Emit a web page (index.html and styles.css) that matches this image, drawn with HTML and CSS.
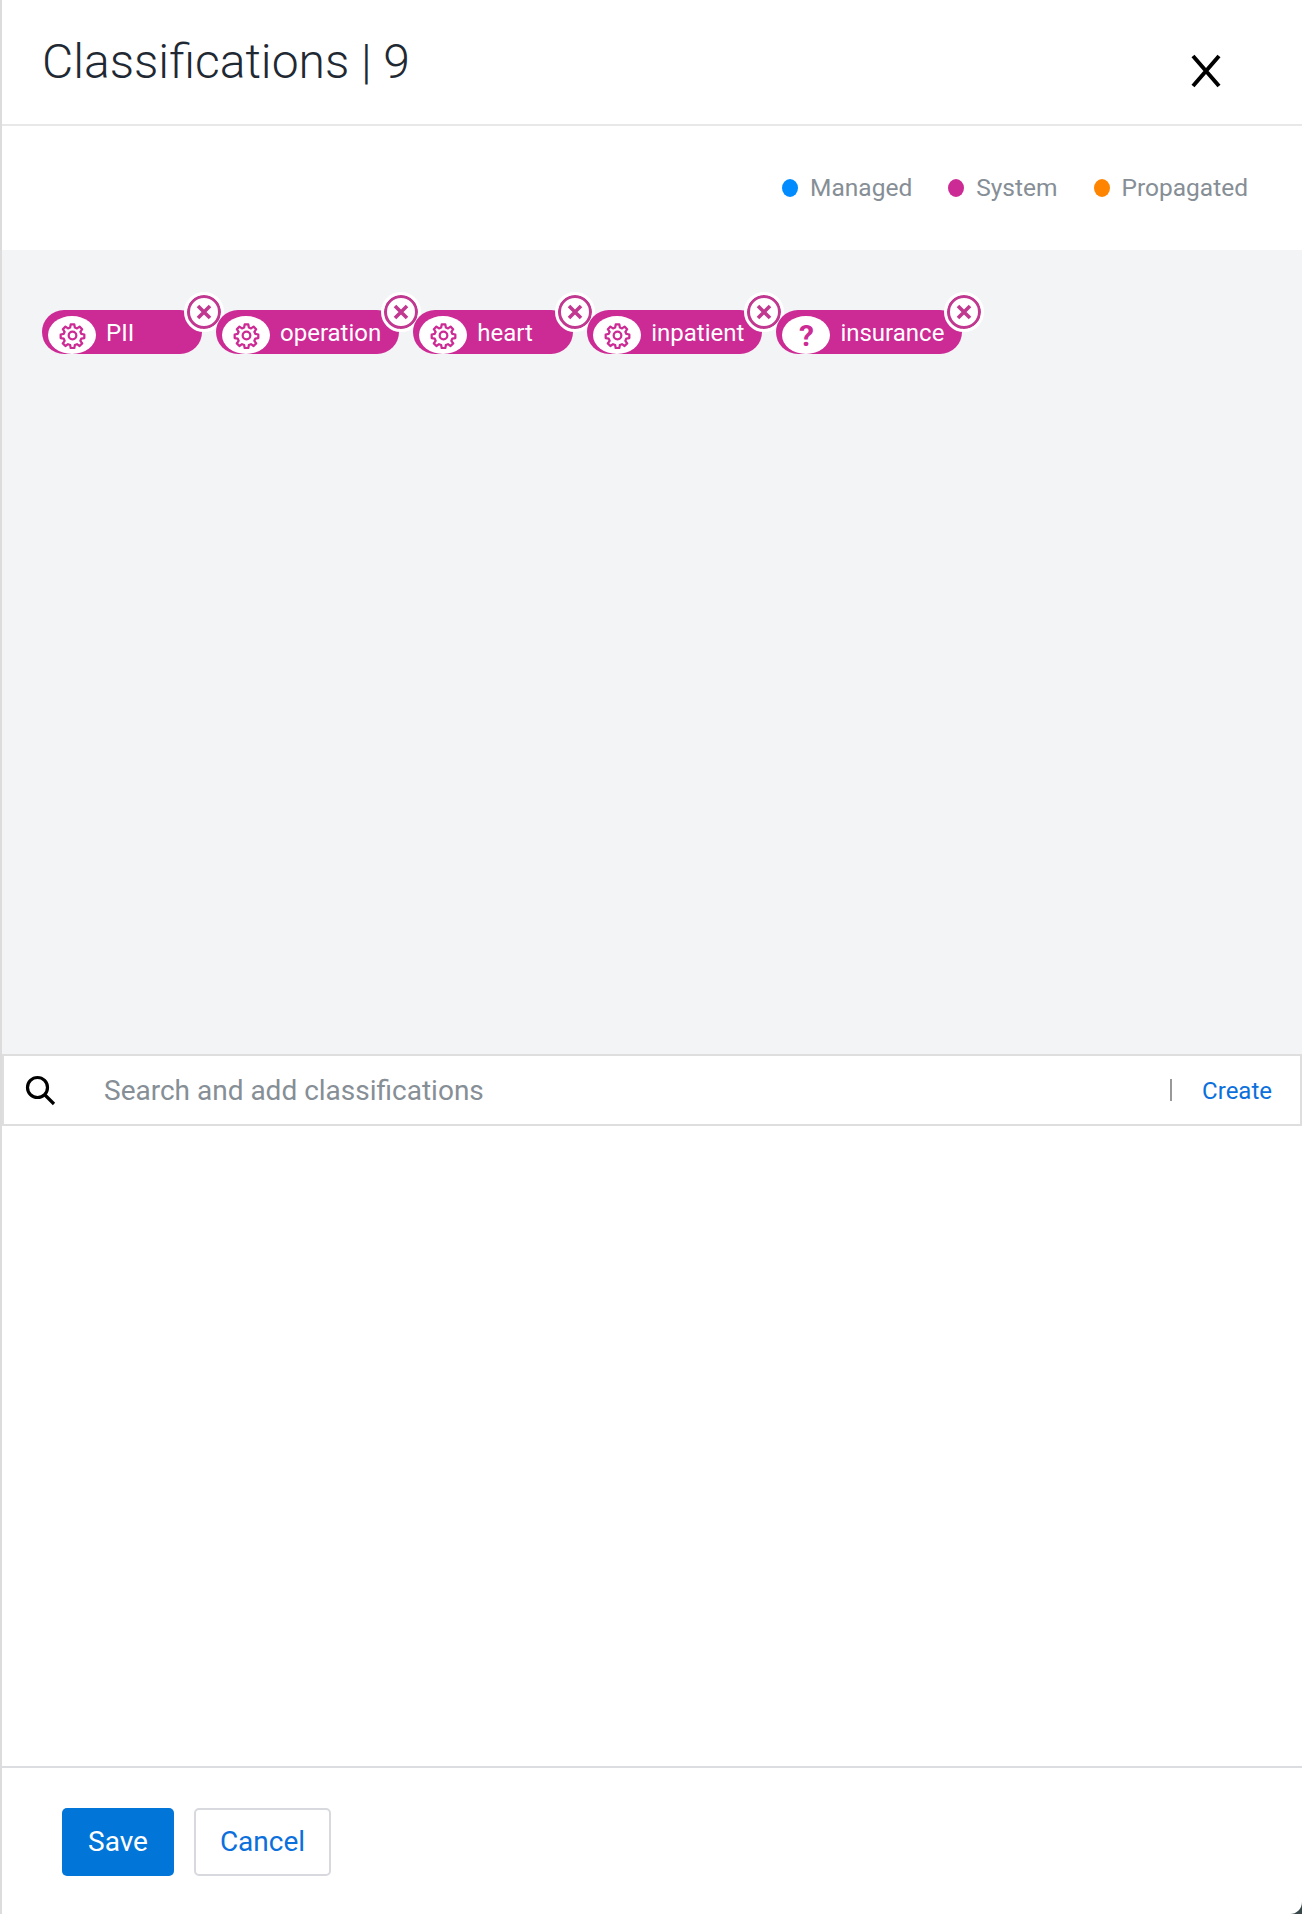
FILE: index.html
```html
<!DOCTYPE html>
<html lang="en">
<head>
    <meta charset="UTF-8">
    <meta name="viewport" content="width=device-width, initial-scale=1.0">
    <title>Classifications</title>
    <link rel="stylesheet" href="styles.css">
</head>
<body>

    <div class="panel">
        <header class="panel-header">
            <h2>Classifications | 9</h2>
            <button class="close-btn" type="button" aria-label="Close">
                <svg width="34" height="34" viewBox="0 0 34 34"><path d="M4 2 L30 32 M30 2 L4 32" fill="none" stroke="#000" stroke-width="4"/></svg>
            </button>
        </header>

        <div class="legend">
            <span class="legend-item"><i class="dot dot-managed"></i>Managed</span>
            <span class="legend-item"><i class="dot dot-system"></i>System</span>
            <span class="legend-item"><i class="dot dot-propagated"></i>Propagated</span>
        </div>

        <div class="chip-area">
            <div class="chip">
                <span class="chip-icon">
                    <svg width="27" height="27" viewBox="0 0 24 24"><use href="#gear"/></svg>
                </span>
                <span class="chip-label">PII</span>
                <button class="chip-remove" type="button" aria-label="Remove PII">
                    <svg width="16" height="16" viewBox="0 0 16 16"><use href="#cross"/></svg>
                </button>
            </div>
            <div class="chip">
                <span class="chip-icon">
                    <svg width="27" height="27" viewBox="0 0 24 24"><use href="#gear"/></svg>
                </span>
                <span class="chip-label">operation</span>
                <button class="chip-remove" type="button" aria-label="Remove operation">
                    <svg width="16" height="16" viewBox="0 0 16 16"><use href="#cross"/></svg>
                </button>
            </div>
            <div class="chip">
                <span class="chip-icon">
                    <svg width="27" height="27" viewBox="0 0 24 24"><use href="#gear"/></svg>
                </span>
                <span class="chip-label">heart</span>
                <button class="chip-remove" type="button" aria-label="Remove heart">
                    <svg width="16" height="16" viewBox="0 0 16 16"><use href="#cross"/></svg>
                </button>
            </div>
            <div class="chip">
                <span class="chip-icon">
                    <svg width="27" height="27" viewBox="0 0 24 24"><use href="#gear"/></svg>
                </span>
                <span class="chip-label">inpatient</span>
                <button class="chip-remove" type="button" aria-label="Remove inpatient">
                    <svg width="16" height="16" viewBox="0 0 16 16"><use href="#cross"/></svg>
                </button>
            </div>
            <div class="chip">
                <span class="chip-icon"><b class="question">?</b></span>
                <span class="chip-label">insurance</span>
                <button class="chip-remove" type="button" aria-label="Remove insurance">
                    <svg width="16" height="16" viewBox="0 0 16 16"><use href="#cross"/></svg>
                </button>
            </div>
        </div>

        <div class="search-bar">
            <svg class="search-icon" width="34" height="34" viewBox="0 0 34 34">
                <circle cx="14.5" cy="14.5" r="10" fill="none" stroke="#000" stroke-width="3.2"/>
                <path d="M22 22 L31 31" fill="none" stroke="#000" stroke-width="3.2"/>
            </svg>
            <input class="search-input" type="text" placeholder="Search and add classifications">
            <span class="search-divider"></span>
            <a class="create-link" href="#">Create</a>
        </div>

        <div class="panel-body"></div>

        <footer class="panel-footer">
            <button class="btn btn-save" type="button">Save</button>
            <button class="btn btn-cancel" type="button">Cancel</button>
        </footer>
    </div>

    <svg class="icon-defs" width="0" height="0" aria-hidden="true">
        <defs>
            <g id="gear" fill="none" stroke="#cc2a94" stroke-width="2" stroke-linejoin="round">
                <circle cx="12" cy="12" r="3.4"/>
                <path d="M10.4 2.2h3.2l.5 2.7 1.9.8 2.3-1.6 2.3 2.3-1.6 2.3.8 1.9 2.7.5v3.2l-2.7.5-.8 1.9 1.6 2.3-2.3 2.3-2.3-1.6-1.9.8-.5 2.7h-3.2l-.5-2.7-1.9-.8-2.3 1.6-2.3-2.3 1.6-2.3-.8-1.9-2.7-.5v-3.2l2.7-.5.8-1.9-1.6-2.3 2.3-2.3 2.3 1.6 1.9-.8z"/>
            </g>
            <path id="cross" d="M2 2 L14 14 M14 2 L2 14" fill="none" stroke="#c0388f" stroke-width="3.6"/>
        </defs>
    </svg>

</body>
</html>
```

FILE: styles.css
```css
html {
    background-color: #37474a;
}

body {
    font-family: Roboto, "Liberation Sans", sans-serif;
    margin: 0;
}

.panel {
    display: flex;
    flex-direction: column;
    height: 1914px;
    box-sizing: border-box;
    background-color: white;
    border-left: 2px solid #dcdcdc;
    border-bottom-right-radius: 12px;
    overflow: hidden;
}

.panel-header {
    display: flex;
    justify-content: space-between;
    height: 124px;
    flex-shrink: 0;
    padding-left: 40px;
    padding-right: 79px;
    border-bottom: 2px solid #e8e8e8;
}

.panel-header h2 {
    margin: 35px 0 0;
    font-size: 48px;
    line-height: 54px;
    font-weight: 300;
    color: #1f2933;
}

.close-btn {
    align-self: flex-start;
    margin-top: 54px;
    padding: 0;
    border: none;
    background: none;
    line-height: 0;
}

.legend {
    display: flex;
    justify-content: flex-end;
    align-items: center;
    gap: 36px;
    height: 124px;
    flex-shrink: 0;
    box-sizing: border-box;
    padding-right: 54px;
    padding-bottom: 1px;
    font-size: 24.5px;
    color: #868e96;
}

.legend-item {
    display: flex;
    align-items: center;
    gap: 12px;
}

.dot {
    width: 16px;
    height: 18px;
    border-radius: 50%;
}

.dot-managed {
    background-color: #008cff;
}

.dot-system {
    background-color: #cc2a94;
}

.dot-propagated {
    background-color: #ff8400;
}

.chip-area {
    display: flex;
    align-items: flex-start;
    gap: 14px;
    height: 804px;
    flex-shrink: 0;
    box-sizing: border-box;
    padding: 60px 40px 0;
    background-color: #f3f4f6;
}

.chip {
    position: relative;
    display: flex;
    align-items: flex-end;
    min-width: 160px;
    height: 44px;
    box-sizing: border-box;
    padding-left: 6px;
    padding-right: 18px;
    background-color: #cc2a94;
    border-radius: 22px;
    color: white;
}

.chip-icon {
    display: flex;
    justify-content: center;
    align-items: center;
    width: 48px;
    height: 38px;
    border-radius: 24px / 19px;
    background-color: white;
}

.question {
    font-size: 30px;
    color: #cc2a94;
}

.chip-label {
    align-self: center;
    margin-top: 1px;
    margin-left: 10px;
    font-size: 24px;
}

.chip-remove {
    position: absolute;
    top: -15px;
    right: -19px;
    display: flex;
    justify-content: center;
    align-items: center;
    width: 34px;
    height: 34px;
    box-sizing: border-box;
    padding: 0;
    background-color: white;
    border: 3px solid #c0388f;
    outline: 3px solid white;
    border-radius: 50%;
}

.search-bar {
    display: flex;
    align-items: center;
    height: 72px;
    flex-shrink: 0;
    box-sizing: border-box;
    padding-left: 19px;
    padding-right: 28px;
    background-color: white;
    border: 2px solid #dedede;
}

.search-icon {
    flex-shrink: 0;
}

.search-input {
    flex: 1;
    margin-left: 47px;
    padding: 0;
    border: none;
    outline: none;
    font-family: inherit;
    font-size: 28px;
}

.search-input::placeholder {
    color: #868e96;
    opacity: 1;
}

.search-divider {
    width: 2px;
    height: 22px;
    margin-right: 30px;
    background-color: #999;
}

.create-link {
    margin-top: 1px;
    color: #0b6fdc;
    text-decoration: none;
    font-size: 24px;
}

.panel-body {
    flex: 1;
    border-bottom: 2px solid #dcdde1;
}

.panel-footer {
    display: flex;
    align-items: flex-start;
    gap: 20px;
    height: 146px;
    flex-shrink: 0;
    box-sizing: border-box;
    padding: 40px 60px 0;
}

.btn {
    height: 68px;
    padding-bottom: 3px;
    border-radius: 5px;
    font-family: inherit;
    font-size: 28px;
}

.btn-save {
    width: 112px;
    background-color: #0275d8;
    border: none;
    color: white;
}

.btn-cancel {
    width: 137px;
    background-color: white;
    border: 2px solid #d8d9de;
    color: #0b6fdc;
}

.icon-defs {
    position: absolute;
}
```
